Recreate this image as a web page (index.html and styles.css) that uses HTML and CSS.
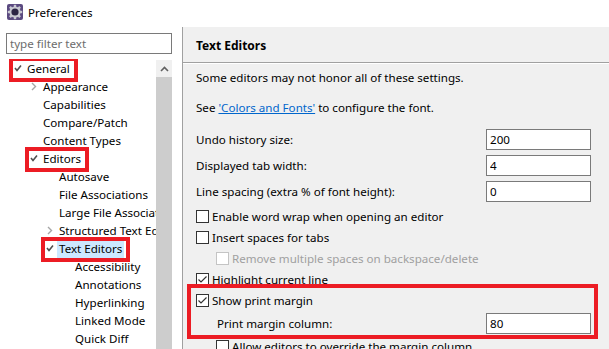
FILE: index.html
```html
<!DOCTYPE html>
<html lang="en">
<head>
    <meta charset="UTF-8">
    <title>Preferences</title>
    <link rel="stylesheet" href="styles.css">
</head>
<body>
    <div class="titlebar">
        <svg class="app-icon" width="16" height="16" viewBox="0 0 16 16">
            <rect x="0" y="0" width="16" height="16" rx="2" fill="#5b4a80"/>
            <g fill="#c9c9d2">
                <circle cx="8" cy="8" r="5.6"/>
                <rect x="6.8" y="0.8" width="2.4" height="3"/>
                <rect x="6.8" y="12.2" width="2.4" height="3"/>
                <rect x="0.8" y="6.8" width="3" height="2.4"/>
                <rect x="12.2" y="6.8" width="3" height="2.4"/>
                <rect x="6.8" y="0.8" width="2.4" height="3" transform="rotate(45 8 8)"/>
                <rect x="6.8" y="12.2" width="2.4" height="3" transform="rotate(45 8 8)"/>
                <rect x="0.8" y="6.8" width="3" height="2.4" transform="rotate(45 8 8)"/>
                <rect x="12.2" y="6.8" width="3" height="2.4" transform="rotate(45 8 8)"/>
            </g>
            <circle cx="8" cy="8" r="3.6" fill="#2c2444"/>
        </svg>
        <span>Preferences</span>
    </div>

    <div class="main">
        <aside class="sidebar">
            <input class="filter" type="text" placeholder="type filter text">
            <div class="tree-wrap">
                <ul class="tree">
                    <li class="lvl0"><span class="node mark"><i class="tw open"></i><span class="label">General</span></span></li>
                    <li class="lvl1"><span class="node"><i class="tw closed"></i><span class="label">Appearance</span></span></li>
                    <li class="lvl1"><span class="node"><i class="tw"></i><span class="label">Capabilities</span></span></li>
                    <li class="lvl1"><span class="node"><i class="tw"></i><span class="label">Compare/Patch</span></span></li>
                    <li class="lvl1"><span class="node"><i class="tw"></i><span class="label">Content Types</span></span></li>
                    <li class="lvl1"><span class="node mark"><i class="tw open"></i><span class="label">Editors</span></span></li>
                    <li class="lvl2"><span class="node"><i class="tw"></i><span class="label">Autosave</span></span></li>
                    <li class="lvl2"><span class="node"><i class="tw"></i><span class="label">File Associations</span></span></li>
                    <li class="lvl2"><span class="node"><i class="tw"></i><span class="label">Large File Associations</span></span></li>
                    <li class="lvl2"><span class="node"><i class="tw closed"></i><span class="label">Structured Text Editors</span></span></li>
                    <li class="lvl2"><span class="node mark"><i class="tw open"></i><span class="label selected">Text Editors</span></span></li>
                    <li class="lvl3"><span class="node"><i class="tw"></i><span class="label">Accessibility</span></span></li>
                    <li class="lvl3"><span class="node"><i class="tw"></i><span class="label">Annotations</span></span></li>
                    <li class="lvl3"><span class="node"><i class="tw"></i><span class="label">Hyperlinking</span></span></li>
                    <li class="lvl3"><span class="node"><i class="tw"></i><span class="label">Linked Mode</span></span></li>
                    <li class="lvl3"><span class="node"><i class="tw"></i><span class="label">Quick Diff</span></span></li>
                </ul>
                <div class="scrollbar">
                    <div class="scroll-btn">
                        <svg width="9" height="6" viewBox="0 0 9 6"><polyline points="1,5 4.5,1.5 8,5" fill="none" stroke="#606060" stroke-width="1.6"/></svg>
                    </div>
                    <div class="scroll-thumb"></div>
                </div>
            </div>
        </aside>

        <section class="page">
            <div class="page-title">Text Editors</div>
            <div class="page-body">
                <p class="note">Some editors may not honor all of these settings.</p>
                <p class="note">See <a href="#">'Colors and Fonts'</a> to configure the font.</p>

                <div class="fields">
                    <div class="field"><label>Undo history size:</label><input type="text" value="200"></div>
                    <div class="field"><label>Displayed tab width:</label><input type="text" value="4"></div>
                    <div class="field"><label>Line spacing (extra % of font height):</label><input type="text" value="0"></div>
                </div>

                <div class="checks">
                    <div class="check"><span class="box"></span>Enable word wrap when opening an editor</div>
                    <div class="check"><span class="box"></span>Insert spaces for tabs</div>
                    <div class="check sub disabled"><span class="box"></span>Remove multiple spaces on backspace/delete</div>
                    <div class="check"><span class="box checked"><svg width="11" height="11" viewBox="0 0 11 11"><polyline points="1.5,5.5 4,8 9.5,2.5" fill="none" stroke="#333" stroke-width="1.2"/></svg></span>Highlight current line</div>
                    <div class="group mark-box">
                        <div class="check"><span class="box checked"><svg width="11" height="11" viewBox="0 0 11 11"><polyline points="1.5,5.5 4,8 9.5,2.5" fill="none" stroke="#333" stroke-width="1.2"/></svg></span>Show print margin</div>
                        <div class="field sub-field"><label>Print margin column:</label><input type="text" value="80"></div>
                    </div>
                    <div class="check sub last"><span class="box"></span>Allow editors to override the margin column</div>
                </div>
            </div>
        </section>
    </div>
</body>
</html>
```

FILE: styles.css
```css
body {
    margin: 0;
    padding: 0;
    width: 609px;
    height: 349px;
    overflow: hidden;
    background: #fff;
    color: #000;
    font-family: "Noto Sans", "Liberation Sans", sans-serif;
    font-size: 11.6px;
}

.titlebar {
    height: 27px;
    display: flex;
    align-items: center;
    padding-left: 7px;
    gap: 5px;
    box-sizing: border-box;
    padding-bottom: 3px;
}

.main {
    display: flex;
    height: 322px;
}

/* left side: filter + tree */
.sidebar {
    width: 182px;
    padding: 6px 0 0 6px;
    box-sizing: border-box;
}

.filter {
    display: block;
    width: 166px;
    height: 21px;
    box-sizing: border-box;
    border: 1px solid #7a7a7a;
    padding: 0 3px;
    font-family: inherit;
    font-size: 11.6px;
    outline: none;
}

.filter::placeholder {
    color: #6d6d6d;
}

.tree-wrap {
    display: flex;
    margin-top: 5px;
    height: 300px;
}

.tree {
    list-style: none;
    margin: 0;
    padding: 0;
    width: 150px;
    overflow: hidden;
    white-space: nowrap;
}

.tree li {
    height: 18px;
    line-height: 19px;
}

.lvl0 { padding-left: 8px; }
.lvl1 { padding-left: 24px; }
.lvl2 { padding-left: 40px; }
.lvl3 { padding-left: 56px; }

.node {
    position: relative;
    display: inline-flex;
    align-items: center;
    height: 18px;
}

.tw {
    display: inline-block;
    width: 11px;
    height: 18px;
    background-repeat: no-repeat;
    background-position: 0 center;
}

.tw.open {
    background-image: url("data:image/svg+xml,%3Csvg xmlns='http://www.w3.org/2000/svg' width='8' height='8'%3E%3Cpolyline points='1,4 3,6.5 7,1.5' fill='none' stroke='%23505050' stroke-width='1.6'/%3E%3C/svg%3E");
}

.tw.closed {
    background-image: url("data:image/svg+xml,%3Csvg xmlns='http://www.w3.org/2000/svg' width='8' height='9'%3E%3Cpolyline points='2,1 5.5,4.5 2,8' fill='none' stroke='%23a6a6a6' stroke-width='1.4'/%3E%3C/svg%3E");
}

.label {
    padding: 0 2px;
}

.label.selected {
    background: #cce8ff;
}

.mark::after {
    content: "";
    position: absolute;
    top: -2px;
    right: -6px;
    bottom: -5px;
    left: -5px;
    border: 4px solid #ec1c24;
}

.scrollbar {
    width: 16px;
    margin-top: 1px;
    display: flex;
    flex-direction: column;
    background: #f0f0f0;
}

.scroll-btn {
    height: 17px;
    display: flex;
    align-items: center;
    justify-content: center;
}

.scroll-thumb {
    flex: 1;
    background: #cdcdcd;
}

/* right side: preference page */
.page {
    flex: 1;
    background: #f0f0f0;
    border-left: 1px solid #a0a0a0;
}

.page-title {
    height: 35px;
    line-height: 38px;
    padding-left: 13px;
    font-size: 12px;
    font-weight: bold;
    border-bottom: 1px solid #a0a0a0;
    box-shadow: 0 1px 0 #fff;
}

.page-body {
    padding: 6px 18px 0 13px;
}

.note {
    margin: 0 0 12px;
    line-height: 18px;
}

.note a {
    color: #0066cc;
    text-decoration: underline;
}

.fields {
    margin-top: 12px;
    display: flex;
    flex-direction: column;
    gap: 5px;
}

.field {
    display: flex;
    align-items: center;
    justify-content: space-between;
}

.field input {
    width: 105px;
    height: 21px;
    box-sizing: border-box;
    border: 1px solid #7a7a7a;
    padding: 0 3px;
    font-family: inherit;
    font-size: 11.6px;
    background: #fff;
}

.checks {
    margin-top: 4px;
}

.check {
    height: 21px;
    display: flex;
    align-items: center;
    gap: 3px;
}

.check.sub {
    padding-left: 20px;
}

.check.last {
    margin-top: 2px;
}

.box {
    width: 13px;
    height: 13px;
    box-sizing: border-box;
    border: 1px solid #333;
    background: #fff;
    display: flex;
    align-items: center;
    justify-content: center;
}

.disabled {
    color: #a0a0a0;
}

.disabled .box {
    border-color: #c4c4c4;
}

.group {
    position: relative;
}

.sub-field {
    margin-top: 2px;
    padding-left: 21px;
}

.mark-box::after {
    content: "";
    position: absolute;
    top: -6px;
    right: -7px;
    bottom: -5px;
    left: -9px;
    border: 4px solid #ec1c24;
}
```
